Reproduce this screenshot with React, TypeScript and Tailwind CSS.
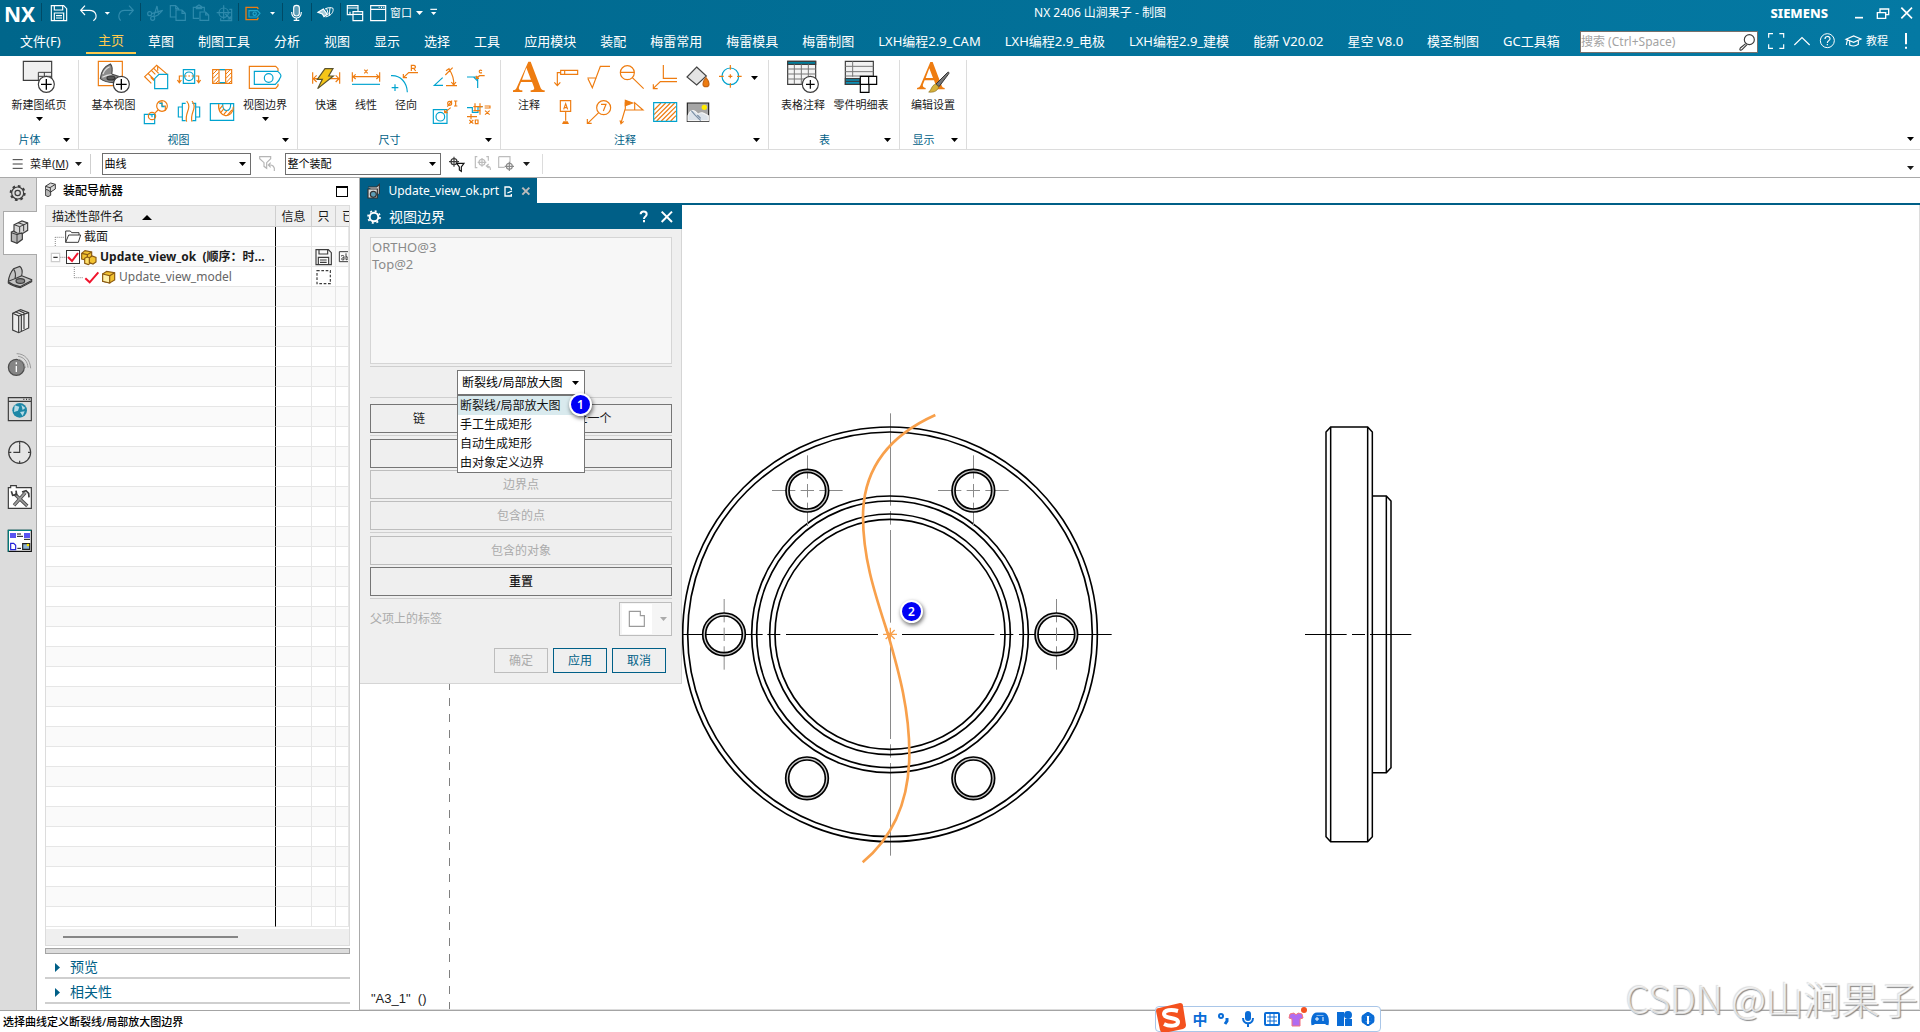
import { useState } from 'react';
import type { ReactNode } from 'react';

const ORANGE = '#ee7c10';
const CYAN = '#00a3cf';
const DARK = '#3c3c3c';

// Icon artwork is drawn on a grid of 3 units per pixel.
type Box = [number, number, number, number];

function Art({ box, color = DARK, className = '', children }: { box: Box; color?: string; className?: string; children?: ReactNode }) {
  return (
    <svg
      className={`block shrink-0 ${className}`}
      width={box[2] / 3}
      height={box[3] / 3}
      viewBox={box.join(' ')}
      fill="none"
      stroke={color}
      strokeWidth={3.5}
      aria-hidden="true"
    >
      {children}
    </svg>
  );
}

function Caret({ className = '' }: { className?: string }) {
  return (
    <svg className={`block shrink-0 ${className}`} width="7" height="4" viewBox="0 0 7 4" fill="currentColor" aria-hidden="true">
      <path d="M0 0h7L3.500 4z" />
    </svg>
  );
}

function Divider() {
  return <span className="mb-1 h-[18px] w-px shrink-0 bg-[#004a66]" />;
}

function QuickBar() {
  const dim = '#2f8bad';
  return (
    <div className="flex h-7 w-[440px] shrink-0 items-center text-white">
      <span className="w-[41px] shrink-0 pb-px pl-1 text-[21px] leading-6 font-bold">NX</span>
      <Divider />
      <button aria-label="保存">
        <Art box={[126, 0, 102, 84]} color="#fff">
          <path d="M154 17h37l9 9v36h-46zM163 17v13h25v-13M163 62v-23h28v23M168 47h18M168 54h18" />
        </Art>
      </button>
      <button aria-label="撤消">
        <Art box={[228, 0, 72, 84]} color="#fff">
          <path d="M255 17l-13 14 13 14M242 31h26c22 0 26 22 12 31" />
        </Art>
      </button>
      <button aria-label="撤消列表">
        <Art box={[300, 0, 45, 84]} color="none">
          <path d="M314 36h16l-8 8z" fill="#fff" />
        </Art>
      </button>
      <button aria-label="重做" disabled>
        <Art box={[345, 0, 75, 84]} color={dim}>
          <path d="M387 17l13 14-13 14M400 31h-26c-18 0-22 20-12 31" />
        </Art>
      </button>
      <Divider />
      <button aria-label="剪切" disabled>
        <Art box={[423, 0, 78, 84]} color={dim}>
          <circle cx="449" cy="41" r="6" />
          <circle cx="458" cy="55" r="6" />
          <path d="M455 41l33-10-14 14-12 5M461 50l10-32 4 22" />
        </Art>
      </button>
      <button aria-label="复制" disabled>
        <Art box={[501, 0, 69, 84]} color={dim}>
          <path d="M527 51h-16v-34h16l9 9v4M527 17v9h9M528 30h18l10 10v21h-28zM546 30v10h10" />
        </Art>
      </button>
      <button aria-label="粘贴" disabled>
        <Art box={[570, 0, 69, 84]} color={dim}>
          <path d="M597 55h-17v-33h33v12M589 26v-6l8-5 8 5v6zM600 36h17l9 9v16h-26zM617 36v9h9" />
        </Art>
      </button>
      <button aria-label="变换" disabled>
        <Art box={[639, 0, 75, 84]} color={dim}>
          <circle cx="671" cy="38" r="14" />
          <path d="M650 38h42M671 16v42M662 55v7h33v-34h-7M676 42l15 15M691 49v8h-8" />
        </Art>
      </button>
      <Divider />
      <button aria-label="视图边界">
        <Art box={[717, 0, 87, 84]} color={ORANGE}>
          <path d="M775 27l-3-5h-34v37h34l3-6" strokeWidth="4" />
          <path d="M763 32h-16v19h24l9-11-8-8z" stroke="#22a6cc" />
          <circle cx="764" cy="41" r="5" stroke="#22a6cc" />
        </Art>
      </button>
      <button aria-label="视图边界选项">
        <Art box={[804, 0, 42, 84]} color="none">
          <path d="M810 36h15l-7 8z" fill="#fff" />
        </Art>
      </button>
      <Divider />
      <button aria-label="语音">
        <Art box={[849, 0, 84, 84]} color="#fff">
          <rect x="881" y="16" width="17" height="32" rx="8" fill="#5d9db6" />
          <path d="M875 36c0 24 29 24 29 0M889 54v8M881 61h17" />
        </Art>
      </button>
      <Divider />
      <button aria-label="触控">
        <Art box={[936, 0, 84, 84]} color="#fff">
          <path d="M954 37l16-10 12 16-10 7-5-8z" fill="#a5cad8" />
          <path d="M975 27c8-5 20-5 24-2 2 8-3 18-12 22l-10 4M980 25l5 18M990 23l-2 22" strokeWidth="3" />
        </Art>
      </button>
      <Divider />
      <button aria-label="切换窗口">
        <Art box={[1023, 0, 78, 84]} color="#fff">
          <path d="M1059 44h-17v-27h32v18M1042 24h32M1059 35h29v27h-29zM1059 43h29M1050 35v9" />
        </Art>
      </button>
      <button className="flex shrink-0 items-center text-[11px] leading-4 whitespace-nowrap">
        <Art box={[1101, 0, 69, 84]} color="#fff">
          <path d="M1112 17h45v45h-45zM1112 28h45" />
          <path d="M1136 22h3M1143 22h3M1150 22h3" />
        </Art>
        <span className="pb-0.5">窗口</span>
        <Caret className="mb-0.5 ml-1" />
      </button>
      <button aria-label="自定义" className="pl-1">
        <Art box={[1278, 0, 39, 84]} color="#fff">
          <path d="M1288 28h20" />
          <path d="M1290 36h16l-8 9z" fill="#fff" stroke="none" />
        </Art>
      </button>
    </div>
  );
}

const tabs = [
  '草图', '制图工具', '分析', '视图', '显示', '选择', '工具', '应用模块', '装配', '梅雷常用', '梅雷模具', '梅雷制图',
  'LXH编程2.9_CAM', 'LXH编程2.9_电极', 'LXH编程2.9_建模', '能新 V20.02', '星空 V8.0', '模圣制图', 'GC工具箱',
];

function Header() {
  return (
    <header className="bg-linear-to-r from-[#00668b] to-[#0479a3] text-white">
      <div className="flex h-7 items-center">
        <QuickBar />
        <h1 className="flex-1 pb-0.5 text-center text-xs">NX 2406 山涧果子 - 制图</h1>
        <div className="flex h-7 w-[160px] shrink-0 items-center justify-end">
          <span className="pr-3 text-[13px] font-extrabold">SIEMENS</span>
          <button aria-label="最小化">
            <Art box={[1200, 0, 90, 84]} color="#fff"><path d="M1245 53h24" strokeWidth="5" /></Art>
          </button>
          <button aria-label="还原">
            <Art box={[1290, 0, 75, 84]} color="#fff"><path d="M1320 37v-10h26v17h-8M1312 38h25v17h-25z" strokeWidth="4" /></Art>
          </button>
          <button aria-label="关闭">
            <Art box={[1365, 0, 75, 84]} color="#fff"><path d="M1384 23l32 32M1416 23l-32 32" strokeWidth="5" /></Art>
          </button>
        </div>
      </div>
      <nav className="flex h-7 items-center text-[13px] leading-5 whitespace-nowrap">
        <button className="w-[86px] shrink-0 pb-0.5 pl-5 text-left">文件(F)</button>
        <button className="h-[26px] self-start border-b-2 border-[#ffc94d] px-3 text-[#ffc94d]">主页</button>
        {tabs.map((tab) => (
          <button key={tab} className="px-3 pb-0.5">{tab}</button>
        ))}
        <div className="ml-auto flex items-center">
          <div className="flex h-[22px] w-[178px] items-center border border-[#77716c] bg-white">
            <input
              type="search"
              aria-label="搜索"
              placeholder="搜索 (Ctrl+Space)"
              className="h-5 min-w-0 flex-1 pb-0.5 text-xs text-[#333] outline-none placeholder:text-[#a3a3a3]"
            />
            <Art box={[894, 93, 57, 60]}>
              <circle cx="928" cy="116" r="15" />
              <path d="M917 128l-16 13c-4 5 1 9 5 5l15-15" />
            </Art>
          </div>
          <button aria-label="全屏">
            <Art box={[954, 84, 93, 84]} color="#fff">
              <path d="M986 113v-12h13M1018 101h13v12M1031 133v12h-13M999 145h-13v-12" />
            </Art>
          </button>
          <button aria-label="收起功能区">
            <Art box={[1047, 84, 78, 84]} color="#fff"><path d="M1063 135l23-22 23 22" /></Art>
          </button>
          <button aria-label="帮助">
            <Art box={[1125, 84, 75, 84]} color="#fff">
              <circle cx="1162" cy="122" r="21" strokeWidth="3" />
              <path d="M1155 117c0-10 15-10 15-1 0 6-8 6-8 13M1162 132v4" />
            </Art>
          </button>
          <button className="flex items-center text-[11px]">
            <Art box={[1200, 84, 78, 84]} color="#fff">
              <path d="M1218 118l23-10 22 9-22 10zM1229 123v12c8 4 18 4 26-2v-12M1222 120l-3 15" />
            </Art>
            <span className="pb-0.5">教程</span>
          </button>
          <button aria-label="提醒">
            <Art box={[1344, 84, 96, 84]} color="#fff"><path d="M1398 99v34M1398 140v6" strokeWidth="6" /></Art>
          </button>
        </div>
      </nav>
    </header>
  );
}

function Group({ label, className, children }: { label: string; className: string; children: ReactNode }) {
  return (
    <section className={`mt-1 flex shrink-0 flex-col border-r border-[#dcdcdc] ${className}`}>
      <div className="flex flex-1">{children}</div>
      <div className="flex h-[18px] items-center text-[11px] leading-4 text-[#005f87]">
        <span className="flex-1 text-center">{label}</span>
        <button aria-label={`${label}选项`} className="mr-2 ml-1"><Caret className="text-black" /></button>
      </div>
    </section>
  );
}

function Big({ label, className, menu, children }: { label: string; className: string; menu?: boolean; children: ReactNode }) {
  return (
    <button className={`flex shrink-0 flex-col items-center text-[11px] leading-4 whitespace-nowrap text-[#1a1a1a] ${className}`}>
      {children}
      <span className="mt-[3px]">{label}</span>
      {menu && <Caret className="mt-1 text-black" />}
    </button>
  );
}

// Small command cells are 33 x 35, in two rows
function Small({ label, at, color = ORANGE, children }: { label: string; at: [number, number]; color?: string; children: ReactNode }) {
  return (
    <button aria-label={label}>
      <Art box={[at[0], at[1], 99, 105]} color={color}>{children}</Art>
    </button>
  );
}

function Ribbon() {
  return (
    <div className="flex h-[94px] border-b border-[#dcdcdc] bg-white">
      <Group label="片体" className="w-[79px]">
        <Big label="新建图纸页" className="w-[78px]" menu>
          <Art box={[69, 180, 102, 102]}>
            <path d="M73 184h85v57h-85z" fill="#f0f0f0" />
            <path d="M118 241v-24h40M118 229h40M136 217v12" strokeWidth="3" />
            <circle cx="142" cy="253" r="24" fill="#fff" />
            <path d="M126 253h32M142 237v32" strokeWidth="4" stroke="#000" />
          </Art>
        </Big>
      </Group>

      <Group label="视图" className="w-[219px] [&>div:first-child]:pl-2">
        <Big label="基本视图" className="w-[53px]">
          <Art box={[288, 180, 102, 102]} color={ORANGE}>
            <path d="M292 184h72v73h-72z" />
            <path d="M298 236c2-20 10-36 30-44 6 6 6 20 4 30l24 8c2 8-6 16-18 18-16 0-30-4-40-12z" fill="#8c8c8c" stroke="#4b4b4b" />
            <path d="M306 222c4-12 10-18 20-22M304 232c10-6 18-8 28-8" stroke="#e2e2e2" />
            <ellipse cx="330" cy="234" rx="12" ry="6" fill="#555" stroke="#333" />
            <circle cx="361" cy="253" r="24" fill="#fff" stroke={DARK} />
            <path d="M345 253h32M361 237v32" strokeWidth="4" stroke="#000" />
          </Art>
        </Big>
        <div className="grid grid-cols-3 grid-rows-2 self-start">
          <Small label="投影视图" at={[420, 180]}>
            <path d="M454 250l-20-20 36-34 32 27M444 220l20 20M454 211l12 12M473 197v15M462 206l14 14M452 232l10 10" />
            <path d="M477 223h26v43h-39v-30z" stroke={CYAN} fill="#fff" />
          </Small>
          <Small label="剖视图" at={[519, 180]}>
            <path d="M550 209h34v41h-34z" stroke={CYAN} />
            <circle cx="567" cy="229" r="13" stroke={CYAN} />
            <path d="M538 246v-18h10M554 228h6M565 228h5M575 228h6M587 228h9v18M532 240l6 8 6-8M590 240l6 8 6-8" />
          </Small>
          <Small label="断面" at={[618, 180]}>
            <path d="M638 209h57v41h-57zM657 209v41M677 209v41" />
            <path d="M639 222l12-12M639 235l17-18M639 248l17-18M648 249l8-8M678 222l12-12M678 235l17-18M678 248l17-18M687 249l8-8" strokeWidth="3" />
            <path d="M659 209h16M659 248h16" stroke={CYAN} />
          </Small>
          <Small label="局部放大图" at={[420, 285]}>
            <path d="M433 343h31v28h-31z" stroke={CYAN} />
            <circle cx="456" cy="348" r="11" />
            <circle cx="486" cy="318" r="16" />
            <path d="M464 340l10-10M474 306h12v12h10v14" />
            <path d="M478 310h8v10h8M448 344h8v8" stroke={CYAN} />
          </Small>
          <Small label="断开视图" at={[519, 285]}>
            <path d="M557 310h-10v52h10M577 310h10v52h-10M547 321h-12v30h12M587 321h12v30h-12" stroke={CYAN} />
            <path d="M560 303c18 22-8 36 0 62M576 303c18 22-8 36 0 62" />
          </Small>
          <Small label="局部剖视图" at={[618, 285]}>
            <path d="M631 311h70v50h-70z" stroke={CYAN} />
            <path d="M656 312c-4 44 44 46 44 8" />
            <path d="M668 312c0 26 24 26 24 0" stroke={CYAN} />
            <path d="M658 328l10-12M662 338l10-12M671 344l10-12M682 346l14-16" />
          </Small>
        </div>
        <Big label="视图边界" className="w-[52px]" menu>
          <Art box={[744, 180, 102, 102]} color={ORANGE}>
            <path d="M834 214v-8l-7-7h-79v66h79l7-8v-6" />
            <path d="M763 214h70c10 8 12 14 7 20-2 8-8 12-14 19h-63z" stroke={CYAN} />
            <circle cx="806" cy="234" r="13" stroke={CYAN} />
          </Art>
        </Big>
      </Group>

      <Group label="尺寸" className="w-[203px] [&>div:first-child]:pl-2">
        <Big label="快速" className="w-10">
          <Art box={[927, 180, 102, 102]} color={ORANGE}>
            <path d="M938 217v34M1019 217v34M940 236h77M950 226l-10 10 10 10M1007 226l10 10-10 10" />
            <path d="M975 206h24l-13 22h14l-47 38 14-28h-15z" fill="#f5c518" stroke="#5b532d" />
          </Art>
        </Big>
        <Big label="线性" className="w-10">
          <Art box={[1050, 180, 102, 102]} color={ORANGE}>
            <path d="M1060 217v28M1142 217v28M1062 230h78M1070 223l-8 7 8 7M1132 223l8 7-8 7M1096 209l10 11M1106 209l-10 11" />
            <path d="M1059 253h84" stroke={CYAN} />
          </Art>
        </Big>
        <Big label="径向" className="w-10">
          <Art box={[1170, 180, 102, 102]} color={ORANGE}>
            <path d="M1176 227c28-2 48 20 49 50M1178 263h20M1188 253v20" stroke={CYAN} />
            <path d="M1257 218h-28l-15 14M1213 222v11h11M1237 213v-17h8c6 2 6 8 0 9h-8M1244 205l6 8" />
          </Art>
        </Big>
        <div className="ml-0.5 grid grid-cols-2 grid-rows-2 self-start">
          <Small label="角度" at={[1284, 180]}>
            <path d="M1328 233l-25 23h26" stroke={CYAN} />
            <path d="M1358 203l-22 22M1347 207c10 15 16 28 14 48M1338 212l9-6 3 10M1354 246l7 9 7-9M1338 257h33" />
          </Small>
          <Small label="倒斜角" at={[1383, 180]}>
            <path d="M1401 231h20l12 12v21M1413 231h20v12" stroke={CYAN} />
            <path d="M1454 227h-15l-11 8M1429 227v8h8M1446 212c-10-6-12 10 0 6" />
          </Small>
          <Small label="孔标注" at={[1284, 285]}>
            <path d="M1300 329h41v41h-41z" stroke={CYAN} />
            <circle cx="1321" cy="350" r="13" stroke={CYAN} />
            <path d="M1352 323l-18 15M1334 329v9h9M1362 303h10M1362 318h10M1367 303v15M1342 320l14-18" />
            <circle cx="1349" cy="310" r="6" />
          </Small>
          <Small label="坐标" at={[1383, 285]}>
            <path d="M1401 323h16v14h17v-17h14" stroke={CYAN} />
            <path d="M1420 320h28M1420 332h22M1425 310v20M1440 310v34M1454 318h16v6h-16M1455 332l14 12M1469 332l-14 12M1401 350h30M1413 342v16M1408 360l12 11M1420 360l-12 11M1426 360h8v11h-8z" />
          </Small>
        </div>
      </Group>

      <Group label="注释" className="w-[268px] [&>div:first-child]:pl-2">
        <Big label="注释" className="w-10">
          <Art box={[36, 180, 102, 102]} color="none">
            <path d="M85 185h7l30 79c2 5 6 7 12 7v5h-42v-5c10 0 12-3 10-9l-6-16H63l-6 15c-2 7 1 10 10 10v5H39v-5c7-1 9-3 12-10zM66 239h27l-14-36z" fill={ORANGE} fillRule="evenodd" />
          </Art>
        </Big>
        <div className="grid grid-cols-6 grid-rows-2 self-start">
          <Small label="特征控制框" at={[147, 180]}>
            <path d="M182 211h51v12h-51zM194 211v12M182 218h-10v38M163 247l9 10 9-10" />
          </Small>
          <Small label="表面粗糙度" at={[246, 180]}>
            <path d="M262 234h28M264 236l13 27 24-64h29" />
          </Small>
          <Small label="焊接符号" at={[345, 180]}>
            <circle cx="382" cy="218" r="21" />
            <path d="M361 217h42M397 233l34 33" />
          </Small>
          <Small label="目标点" at={[444, 180]}>
            <path d="M490 195v40h41M531 245h-50l-21 20M460 253v13h13" />
          </Small>
          <Small label="剖面填充" at={[543, 180]}>
            <path d="M590 201l29 27-29 27-29-24z" fill="#e4e4e4" stroke="#444" />
            <path d="M618 233c-12 14-12 27 0 27s12-13 0-27z" fill={ORANGE} stroke="#c56516" />
          </Small>
          <Small label="中心标记" at={[642, 180]}>
            <circle cx="691" cy="229" r="25" stroke={CYAN} />
            <path d="M657 229h14M711 229h14M691 195v14M691 249v14M685 229h12M691 223v12" />
          </Small>
          <Small label="基准特征" at={[147, 285]}>
            <path d="M181 302h31v32h-31zM197 334v28M191 328l6-17 6 17M193 323h8" />
            <path d="M186 372l4-8h13l4 8z" fill={ORANGE} stroke="none" />
          </Small>
          <Small label="符号标注" at={[246, 285]}>
            <circle cx="311" cy="323" r="21" />
            <path d="M303 313h15l-8 20M296 338l-33 32M262 357v13h13" />
          </Small>
          <Small label="焊接标注" at={[345, 285]}>
            <path d="M376 307v18l-13 44M360 361l3 10 8-7M376 330h53l-25-22v22" />
            <path d="M376 301l22 8-22 8z" fill={ORANGE} />
          </Small>
          <Small label="剖面线" at={[444, 285]}>
            <path d="M462 330l21-21M462 344l35-35M462 358l49-49M470 363l54-54M484 363l44-44M498 363l30-30M512 363l16-16" />
            <path d="M461 308h69v56h-69z" stroke={CYAN} />
          </Small>
          <Small label="图像" at={[543, 285]}>
            <path d="M562 309h64v55h-64z" fill="#a5a5a5" stroke="#222" />
            <path d="M564 347c8-20 18-20 30-4 10-10 20-2 31 4v15h-61z" fill="#dce3ea" stroke="#f5f5f5" />
            <path d="M574 332l10 12 18 18M592 345l10 10" stroke="#7a8fa6" />
            <circle cx="613" cy="322" r="8" fill="#ffec00" stroke="none" />
          </Small>
        </div>
        <button aria-label="更多注释" className="flex h-[35px] w-3.5 items-center justify-center"><Caret /></button>
      </Group>

      <Group label="表" className="w-[131px] [&>div:first-child]:pl-[5px]">
        <Big label="表格注释" className="w-[58px]">
          <Art box={[858, 180, 102, 102]}>
            <path d="M863 184h84v69h-84z" fill="#f4f4f4" />
            <path d="M863 184h84v9h-84z" fill="#00809f" />
            <path d="M863 207h84M863 222h84M863 237h84M883 193v60M904 193v60M925 193v60" strokeWidth="3" stroke="#777" />
            <circle cx="931" cy="253" r="24" fill="#fff" />
            <path d="M918 253h26M931 240v26" stroke="#000" />
          </Art>
        </Big>
        <Big label="零件明细表" className="w-[58px]">
          <Art box={[1029, 180, 102, 102]}>
            <path d="M1033 184h84v69h-84z" fill="#f1f1f1" />
            <path d="M1033 199h84M1033 215h84M1033 228h84M1055 184v46" strokeWidth="3" stroke="#777" />
            <path d="M1033 236h44v17h-44z" fill="#0d8fb5" />
            <path d="M1033 244h44" />
            <path d="M1078 229h49v24h-23v24h-26zM1103 229v24M1078 253h26" fill="#fff" stroke="#000" />
          </Art>
        </Big>
      </Group>

      <Group label="显示" className="w-[67px]">
        <Big label="编辑设置" className="w-[66px]">
          <Art box={[1251, 180, 102, 102]} color="none">
            <path d="M1294 186h7l26 68c2 7 5 9 10 10v4h-34v-4c8-1 9-4 7-9l-5-14h-28l-5 12c-2 7 1 10 8 11v4h-26v-4c7-1 9-4 11-9zM1280 234h22l-11-29z" fill={ORANGE} fillRule="evenodd" />
            <path d="M1311 252l35-35c6-2 4 4 2 6l-28 37z" fill="#777" stroke="#333" strokeWidth="3" />
            <path d="M1310 252l9 9c-4 14-18 17-30 15 8-4 8-20 21-24z" fill="#d6b13a" stroke="#8a6d1c" strokeWidth="2" />
          </Art>
        </Big>
      </Group>
      <button aria-label="功能区选项" className="mr-1.5 mb-2 ml-auto self-end"><Caret /></button>
    </div>
  );
}

function Combo({ label, value, className }: { label: string; value: string; className: string }) {
  return (
    <div className={`relative ${className}`}>
      <select aria-label={label} className="block h-[22px] w-full appearance-none border border-[#6e6e6e] bg-white px-0.5 text-[11px] leading-4 text-black outline-none">
        <option>{value}</option>
      </select>
      <Caret className="pointer-events-none absolute top-[9px] right-[5px] text-black" />
    </div>
  );
}

function SelectionBar() {
  return (
    <div className="flex h-7 items-center border-b border-[#a9a9a9] bg-white text-[11px] leading-4 text-[#1a1a1a]">
      <button className="flex items-center pl-3">
        <Art box={[36, 460, 54, 60]}><path d="M38 477h30M38 490h30M38 503h30" strokeWidth="3" /></Art>
        <span>菜单(<u>M</u>)</span>
        <Caret className="ml-1.5" />
      </button>
      <span className="ml-2 h-5 w-px bg-[#cfcfcf]" />
      <Combo label="类型过滤器" value="曲线" className="ml-[11px] w-[149px]" />
      <button aria-label="过滤器" disabled>
        <Art box={[753, 453, 102, 78]} color="#b5b5b5">
          <path d="M779 470h33v6l-12 12v17l-8-6v-11l-13-12zM812 488l-7 7 7 7M805 495c14-2 20 6 18 18" />
        </Art>
      </button>
      <Combo label="选择范围" value="整个装配" className="w-[156px]" />
      <button aria-label="选择方法">
        <Art box={[1323, 453, 87, 78]}>
          <circle cx="1362" cy="485" r="9" />
          <path d="M1347 485h30M1362 470v30" />
          <path d="M1370 490h22l-8 11v13l-6-4v-9z" fill="#fff" stroke="#111" />
        </Art>
      </button>
      <button aria-label="重置选择" disabled>
        <Art box={[1410, 453, 78, 78]} color="#bdbdbd">
          <circle cx="1446" cy="487" r="9" />
          <path d="M1432 470h-6v33h6M1459 470h6v12M1433 487h26M1446 474v26M1466 492l-7 6 7 6M1460 498c8 0 12 4 11 12" />
        </Art>
      </button>
      <button aria-label="选择框" className="flex items-center" disabled>
        <Art box={[-12, 453, 75, 78]} color="#bdbdbd">
          <path d="M-4 470h34v20M-4 470v32h18" />
          <circle cx="28" cy="499" r="9" stroke="#8a8a8a" />
          <path d="M14 499h28M28 485v28" stroke="#8a8a8a" />
        </Art>
      </button>
      <button aria-label="选择框选项" className="ml-0.5"><Caret /></button>
      <span className="ml-3 h-5 w-px bg-[#dcdcdc]" />
      <button aria-label="选择条选项" className="mt-2 mr-1.5 ml-auto"><Caret /></button>
    </div>
  );
}

const resources: { label: string; box: Box; art: ReactNode }[] = [
  {
    label: '装配导航器',
    box: [12, 126, 96, 126],
    art: (
      <>
        <path d="M34 186l16-7 17 7v22l-16 12-17-7z" fill="#b5b5b5" />
        <path d="M42 164l24-11 17 6v22l-16 10-16-2-9-5z" fill="#d8d8d8" />
        <path d="M42 164l17 6 24-11M59 170v18M34 188l17 6 16-6M51 194v26M54 158l17 6v20" strokeWidth="3" />
      </>
    ),
  },
  {
    label: '约束导航器',
    box: [0, 255, 108, 132],
    art: (
      <>
        <path d="M25 334c2-16 6-26 16-38l18-7c8 6 8 20 6 28l30 12v6l-34 18c-16-3-28-8-36-14z" fill="#c4c4c4" />
        <path d="M41 298c6 8 6 20 4 28l-20 8M45 326l20-9M26 336c10 8 20 12 34 14l34-18" />
        <ellipse cx="61" cy="333" rx="13" ry="7" fill="#8a8a8a" />
      </>
    ),
  },
  {
    label: '重用库',
    box: [0, 387, 108, 132],
    art: (
      <>
        <path d="M38 430l24-11 24 9v46l-30 14-18-8z" fill="#ececec" />
        <path d="M38 430l18 8v50M56 438l30-10M46 425l18 8v50M54 421l18 8v48" />
      </>
    ),
  },
  {
    label: '产品信息',
    box: [0, 519, 108, 132],
    art: (
      <>
        <circle cx="49" cy="592" r="24" fill="#858585" stroke="#4c4c4c" />
        <path d="M49 588v18M49 577v6" stroke="#fff" strokeWidth="4" />
        <path d="M54 568c12 2 20 12 22 26M54 559c18 2 29 16 30 34M50 551c24 0 40 18 42 44" stroke="#9a9a9a" strokeWidth="3" />
      </>
    ),
  },
  {
    label: '浏览器',
    box: [0, 21, 108, 132],
    art: (
      <>
        <path d="M25 53h69v69h-69zM25 64h69M70 58h3M78 58h3M86 58h3" />
        <circle cx="59" cy="91" r="22" fill="#1d87a6" stroke="none" />
        <path d="M44 76l14 4-4 12-12 4zM64 74l12 10-8 6zM60 96l14-2-6 14zM44 102l8 6" fill="#b5dbe6" stroke="none" />
      </>
    ),
  },
  {
    label: '历史记录',
    box: [0, 153, 108, 132],
    art: (
      <>
        <circle cx="59" cy="217" r="33" fill="#e6e6e6" />
        <path d="M59 193v24h-19M59 184v8M59 242v8M26 217h8M84 217h8" />
      </>
    ),
  },
  {
    label: '加工向导',
    box: [0, 285, 108, 132],
    art: (
      <>
        <path d="M25 323h7v-6h17v6h45v62h-69z" fill="#fff" />
        <path d="M42 376l34-38M44 342l38 36" stroke="#4a4a4a" strokeWidth="10" />
        <path d="M42 376l34-38M44 342l38 36" stroke="#9d9d9d" strokeWidth="5" />
        <path d="M66 336l12-4 8 8 1 12M34 334l4 12 12-2-2-12" strokeWidth="5" />
      </>
    ),
  },
  {
    label: '角色',
    box: [0, 417, 108, 132],
    art: (
      <>
        <path d="M25 451h69v63h-69z" fill="#fff" stroke="#111" />
        <path d="M25 515v-64h69" stroke="#008080" />
        <path d="M30 459h18v15h-18zM72 459h18v15h-18z" fill="#5a55f0" stroke="none" />
        <path d="M51 462h12M51 469h18M52 505h11M72 478h18" stroke="#111" strokeWidth="3" />
        <path d="M32 490h9l6 6v13h-15z" stroke="#2522d8" />
        <path d="M68 491h21v17h-21z" fill="#8db3d6" stroke="#222" />
        <circle cx="84" cy="495" r="4" fill="#ffe600" stroke="none" />
      </>
    ),
  },
];

function ResourceBar() {
  return (
    <nav className="flex w-[37px] shrink-0 flex-col bg-[#dcdcdc]" aria-label="资源条">
      <button aria-label="设置" className="h-[33px] border-r border-[#aaa]">
        <Art box={[0, 24, 108, 99]}>
          <circle cx="53" cy="69" r="18" />
          <circle cx="53" cy="69" r="8" />
          <circle cx="53" cy="69" r="21" strokeWidth="6" strokeDasharray="8 8.490" />
        </Art>
      </button>
      {resources.map((item, i) =>
        i === 0 ? (
          <button key={item.label} aria-label={item.label} className="ml-[3px] h-11 border-y border-l border-[#aaa] bg-white">
            <Art box={item.box}>{item.art}</Art>
          </button>
        ) : (
          <button key={item.label} aria-label={item.label} className="h-11 border-r border-[#aaa]">
            <Art box={item.box}>{item.art}</Art>
          </button>
        ),
      )}
      <div className="flex-1 border-r border-[#aaa]" />
    </nav>
  );
}

const cell = 'h-5 border-r border-b border-[#e6e6e6] p-0';
const nameCell = 'h-5 border-r border-b border-r-black border-b-[#e6e6e6] p-0';

function Cube() {
  return (
    <>
      <path d="M308 312l12-8 24 4v22l-15 9-21-5z" fill="#f2c230" stroke="#8a5a12" />
      <path d="M308 312l21 5v22l-21-5z" fill="#fff0a8" stroke="#8a5a12" />
      <path d="M329 317l15-9" stroke="#8a5a12" />
    </>
  );
}

function PartTree() {
  const [checked, setChecked] = useState(true);
  const blank = Array.from({ length: 32 });
  return (
    <div className="overflow-hidden border border-[#dcdcdc]">
      <table className="w-full table-fixed border-separate border-spacing-0 text-xs leading-4 text-[#1a1a1a]">
        <colgroup>
          <col />
          <col className="w-9" />
          <col className="w-6" />
          <col className="w-[13px]" />
        </colgroup>
        <thead className="bg-[#efefef] text-left">
          <tr>
            <th className="h-[21px] border-r border-b border-[#cfcfcf] p-0 pt-0.5 pl-1.5 font-normal">
              <span className="flex items-center">
                描述性部件名
                <svg className="ml-[18px]" width="10" height="5" viewBox="0 0 10 5" aria-hidden="true"><path d="M0 5h10L5 0z" /></svg>
              </span>
            </th>
            <th className="border-r border-b border-[#cfcfcf] p-0 pt-0.5 text-center font-normal">信息</th>
            <th className="border-r border-b border-[#cfcfcf] p-0 pt-0.5 text-center font-normal">只</th>
            <th className="overflow-hidden border-b border-[#cfcfcf] p-0 pt-0.5 pl-1.5 font-normal whitespace-nowrap">已</th>
          </tr>
        </thead>
        <tbody>
          <tr>
            <td className={nameCell}>
              <div className="flex items-center">
                <Art box={[138, 171, 114, 57]}>
                  <path d="M166 228v-27M166 202h26" stroke="#999" strokeDasharray="3 3" />
                  <path d="M197 217v-34h14l4 5h22v7M197 217l9-22h36l-7 22z" strokeWidth="3" />
                </Art>
                截面
              </div>
            </td>
            <td className={cell} /><td className={cell} /><td className={cell} />
          </tr>
          <tr className="bg-[#fafafa]">
            <td className={nameCell}>
              <div className="flex items-center">
                <Art box={[138, 231, 60, 57]}>
                  <path d="M154 250h25v25h-25z" fill="#fff" stroke="#ccc" />
                  <path d="M160 262h13" stroke="#222" />
                  <path d="M181 262h16" stroke="#999" strokeDasharray="3 3" />
                </Art>
                <label className="relative block size-3.5 shrink-0">
                  <input
                    type="checkbox"
                    aria-label="Update_view_ok"
                    checked={checked}
                    onChange={() => setChecked(!checked)}
                    className="block size-3.5 appearance-none border border-[#333] bg-white"
                  />
                  {checked && (
                    <svg className="pointer-events-none absolute inset-0" viewBox="0 0 14 14" fill="none" stroke="#f0142d" strokeWidth="2" aria-hidden="true">
                      <path d="M2 7l4 4 6-8" />
                    </svg>
                  )}
                </label>
                <Art box={[240, 231, 60, 57]} color="#8a5a12">
                  <path d="M245 250l10-8 20 4v18l-12 7-18-4z" fill="#f2c230" />
                  <path d="M245 250l17 4 13-8M262 254v16" />
                  <path d="M254 265l7-4 12 3v14l-8 6-11-4z" fill="#ffe06a" />
                  <path d="M268 263l8-5 12 4v14l-9 6-11-4z" fill="#f2c230" />
                </Art>
                <span className="font-bold whitespace-pre">Update_view_ok  (顺序：时...</span>
              </div>
            </td>
            <td className={cell} />
            <td className={cell}>
              <Art box={[937, 231, 66, 57]}>
                <path d="M949 239h37l9 9v36h-46zM958 239v13h26v-13M956 284v-22h31v22M961 270h20M961 277h20" />
              </Art>
            </td>
            <td className={cell}>
              <Art box={[1011, 231, 36, 57]}>
                <path d="M1060 245h-39v30h39M1026 258c8-4 9 0 9 4v7c-8 3-12-5 0-6M1041 250v19c8 2 8-10 0-9" strokeWidth="3" />
              </Art>
            </td>
          </tr>
          <tr>
            <td className={nameCell}>
              <div className="flex items-center">
                <Art box={[138, 291, 219, 57]}>
                  <path d="M223 291v32M223 323h26" stroke="#999" strokeDasharray="3 3" />
                  <path d="M256 325l13 12 26-30" stroke="#f0142d" strokeWidth="6" />
                  <Cube />
                </Art>
                <span className="text-[#666]">Update_view_model</span>
              </div>
            </td>
            <td className={cell} />
            <td className={cell}>
              <Art box={[937, 291, 66, 57]}>
                <path d="M952 302h40v39h-40z" strokeDasharray="8 5" />
              </Art>
            </td>
            <td className={cell} />
          </tr>
          {blank.map((_, i) => (
            <tr key={i} className="odd:bg-white even:bg-[#fafafa]">
              <td className={nameCell} /><td className={cell} /><td className={cell} /><td className={cell} />
            </tr>
          ))}
        </tbody>
      </table>
      <div className="mt-0.5 flex h-4 items-center bg-[#efefef] pl-[17px]">
        <div className="h-0.5 w-[175px] bg-[#868686]" />
      </div>
    </div>
  );
}

function Navigator() {
  return (
    <aside className="flex w-[323px] shrink-0 flex-col border-r border-[#aaa] bg-white pr-[9px] pl-2">
      <div className="flex h-[27px] items-center">
        <Art box={[135, 24, 54, 81]}>
          <path d="M136 60l8-5 8 4v17l-8 4-8-4z" fill="#b5b5b5" strokeWidth="3" />
          <path d="M136 49l16-10 14 4v14l-14 9-8-6-8-2z" fill="#d8d8d8" strokeWidth="3" />
          <path d="M136 49l14 4 16-10M151 54v14" strokeWidth="3" />
        </Art>
        <h2 className="pb-0.5 text-xs font-medium text-black">装配导航器</h2>
        <button aria-label="最大化" className="mr-0.5 ml-auto h-[11px] w-3 border border-t-2 border-black" />
      </div>
      <PartTree />
      <div className="mt-0.5 h-1.5 border border-[#a4a4a4] bg-[#dcdcdc]" />
      {['预览', '相关性'].map((name) => (
        <button key={name} className="flex h-[25px] items-center border-b-2 border-[#cfcfcf] pt-[3px] pl-[10px] text-left text-sm leading-5 text-[#005f87]">
          <svg className="mr-2.5" width="5" height="9" viewBox="0 0 5 9" fill="currentColor" aria-hidden="true"><path d="M0 0l5 4.500L0 9z" /></svg>
          {name}
        </button>
      ))}
    </aside>
  );
}

function Step({ n, className }: { n: number; className: string }) {
  return (
    <span className={`absolute flex size-[23px] items-center justify-center rounded-full border-2 border-white bg-[#0000f5] text-xs font-semibold text-white shadow-[1px_2px_4px_rgba(0,0,0,0.6)] ${className}`}>
      {n}
    </span>
  );
}

const modes = ['断裂线/局部放大图', '手工生成矩形', '自动生成矩形', '由对象定义边界'];

const wide = 'block h-[29px] border border-[#757575] text-xs leading-4 text-[#1a1a1a] disabled:border-[#bdbdbd] disabled:text-[#ababab]';

function Line() {
  return <div className="mt-0.5 mb-[3px] h-px bg-[#cfcfcf]" />;
}

function BoundaryDialog() {
  const [mode, setMode] = useState(modes[0]);
  return (
    <div role="dialog" aria-label="视图边界" className="absolute top-0 left-0 w-[322px] border-b border-[#d5d5d5] bg-[#efefef] shadow-[inset_-1px_0_0_#d5d5d5]">
      <div className="flex h-6 items-center bg-[#005f87] text-white">
        <Art box={[30, 105, 87, 72]} color="#fff">
          <circle cx="72" cy="141" r="13" strokeWidth="6" />
          <circle cx="72" cy="141" r="18" strokeWidth="5" strokeDasharray="6 8.140" />
        </Art>
        <h2 className="text-sm leading-5">视图边界</h2>
        <button aria-label="帮助" className="ml-auto">
          <Art box={[860, 105, 60, 72]} color="#fff">
            <path d="M871 133c0-11 18-11 18 0 0 7-8 6-8 14M881 150v7" strokeWidth="6" />
          </Art>
        </button>
        <button aria-label="关闭">
          <Art box={[920, 105, 75, 72]} color="#fff"><path d="M934 125l31 31M965 125l-31 31" strokeWidth="6" /></Art>
        </button>
      </div>
      <div className="flex flex-col px-2.5 pt-2 pb-2.5">
        <ul className="h-[127px] border border-[#d5d5d5] bg-[#f7f7f7] px-px pt-px text-[13px] leading-[17px] text-[#8a8a8a]">
          <li>ORTHO@3</li>
          <li>Top@2</li>
        </ul>
        <Line />
        <div className="relative mx-auto h-[25px] w-32">
          <select
            aria-label="边界类型"
            value={mode}
            onChange={(e) => setMode(e.target.value)}
            className="block h-full w-full appearance-none border border-[#757575] bg-white px-1 text-xs leading-4 text-black outline-none"
          >
            {modes.map((m) => <option key={m}>{m}</option>)}
          </select>
          <Caret className="pointer-events-none absolute top-[11px] right-1.5 text-black" />
          <div role="listbox" aria-label="边界类型" className="absolute top-full left-0 z-10 w-full border border-[#757575] bg-white text-xs text-[#111]">
            {modes.map((m) => (
              <button
                key={m}
                role="option"
                aria-selected={m === mode}
                onClick={() => setMode(m)}
                className="block h-[19px] w-full pl-0.5 text-left leading-[19px] aria-selected:bg-[#d9eaee]"
              >
                {m}
              </button>
            ))}
            <Step n={1} className="-top-[3px] -right-2" />
          </div>
        </div>
        <div className="mt-0.5 mb-1.5 h-px bg-[#cfcfcf]" />
        <div className="flex justify-between">
          <button className={`${wide} w-[98px]`}>链</button>
          <button className={`${wide} w-[204px] border-l-0 pl-12`}>上一个</button>
        </div>
        <Line />
        <div className="flex flex-col gap-0.5">
          <button className={wide} aria-label="锚点" />
          <button className={wide} disabled>边界点</button>
          <button className={wide} disabled>包含的点</button>
        </div>
        <Line />
        <div className="flex flex-col gap-0.5">
          <button className={wide} disabled>包含的对象</button>
          <button className={`${wide} font-medium`}>重置</button>
        </div>
        <Line />
        <div className="flex h-[34px] items-center justify-between text-xs text-[#ababab]">
          <span>父项上的标签</span>
          <button aria-label="父项上的标签" className="flex h-full w-[53px] items-center border border-[#bdbdbd] bg-[#f5f5f5] pl-0.5" disabled>
            <span className="flex size-[30px] items-center justify-center bg-white">
              <Art box={[837, 30, 54, 54]} color="#9a9a9a"><path d="M841 34h33v13h12v32h-45z" /></Art>
            </span>
            <Caret className="ml-2" />
          </button>
        </div>
        <div className="mt-3 flex justify-end gap-[5px] pr-1.5 text-xs leading-4">
          <button className="h-[25px] w-[54px] border border-[#bdbdbd] text-[#ababab]" disabled>确定</button>
          <button className="h-[25px] w-[54px] border border-[#005f87] text-[#005f87]">应用</button>
          <button className="h-[25px] w-[54px] border border-[#005f87] text-[#005f87]">取消</button>
        </div>
      </div>
    </div>
  );
}

const holes = [[382, 272, 1], [880, 272, 1], [132, 703, 0], [1129, 703, 0], [381, 1135, -1], [880, 1135, -1]];

function Sheet() {
  return (
    <svg className="absolute inset-0 h-full w-full" fill="none" stroke="#000" aria-label="图纸">
      <line x1="89.500" y1="477" x2="89.500" y2="805" stroke="#808080" strokeDasharray="8 8" />
      <svg x="320" y="195" width="440" height="480" viewBox="0 0 1320 1440">
        <path d="M7 703.500H248M262 703.500h39M318 703.500h276M611 703.500h40M666 703.500h277M960 703.500h40M1017 703.500h278" strokeWidth="3" />
        <path d="M631.500 40V317M631.500 333v41M631.500 390v278M631.500 684v40M631.500 740v277M631.500 1033v40M631.500 1089v278" stroke="#8a8a8a" strokeWidth="3" />
        <g strokeWidth="5">
          {[622, 607, 415, 400, 361, 345].map((r) => (
            <circle key={r} cx="630" cy="703" r={r} />
          ))}
        </g>
        {holes.map(([x, y, kind]) => (
          <g key={`${x}-${y}`} strokeWidth="5">
            {kind >= 0 && (
              <path d={`M${x + 0.5} ${y - 106}v70m0 16v40m0 16v70`} stroke="#8a8a8a" strokeWidth="3" />
            )}
            {kind === 1 && (
              <path d={`M${x - 106} ${y - 0.5}h70m16 0h40m16 0h70`} stroke="#8a8a8a" strokeWidth="3" />
            )}
            <circle cx={x} cy={y} r="60" stroke="#ccc" strokeWidth="8" />
            <circle cx={x} cy={y} r="64" />
            <circle cx={x} cy={y} r="55" />
          </g>
        ))}
        <g stroke="#f8a04b">
          <path d="M766 45C610 115 549 220 549 350C549 480 588 590 624 703C658 820 688 930 688 1060C688 1200 640 1310 548 1387" strokeWidth="8" />
          <path d="M610 703h41M631 683v40M617 690l27 27M644 690l-27 27" strokeWidth="4" />
        </g>
      </svg>
      <svg x="930" y="205" width="140" height="450" viewBox="0 0 420 1350" strokeWidth="4.500">
        <path d="M122 51H233L247 66V1280L233 1295H122L108 1280V66zM122 51V1295M233 51V1295" />
        <path d="M247 258H289L303 273V1073L289 1088H247M289 258V1088" />
        <path d="M45 673.500H170M186 673.500h39M240 673.500h124" strokeWidth="3" />
      </svg>
    </svg>
  );
}

function Workspace() {
  return (
    <main className="flex min-w-0 flex-1 flex-col bg-white">
      <div className="flex h-[27px] border-b-2 border-[#005f87]">
        <div className="flex h-[27px] w-[177px] items-center justify-between bg-[#005f87] text-xs leading-5 text-white">
          <Art box={[30, 24, 78, 75]} color="#333">
            <path d="M54 54h28v27h-28zM54 48h26l8-8v30" fill="#ddd" />
            <circle cx="70" cy="70" r="9" fill="#5d9db6" />
          </Art>
          <span className="pb-0.5">Update_view_ok.prt</span>
          <Art box={[462, 24, 45, 75]} color="#fff">
            <path d="M490 57v-5l-6-4h-13v27h19v-6M478 66l14-6" strokeWidth="4" />
          </Art>
          <button aria-label="关闭标签页">
            <Art box={[507, 24, 54, 75]} color="#bbb"><path d="M517 50l21 21M538 50l-21 21" strokeWidth="6" /></Art>
          </button>
        </div>
      </div>
      <div className="relative flex flex-1 flex-col border-r border-b border-[#dcdcdc]">
        <Sheet />
        <Step n={2} className="top-[395px] left-[540px]" />
        <p className="mt-auto mb-0.5 ml-[11px] font-['Liberation_Sans',sans-serif] text-[13px] leading-4 whitespace-pre text-[#222]">"A3_1"  ()</p>
        <BoundaryDialog />
      </div>
    </main>
  );
}

function ImeBar() {
  const blue = '#0a6cd6';
  return (
    <div className="absolute bottom-0 left-[1155px] flex h-[26px] w-[226px] items-center rounded-sm border border-[#a9c6e8] bg-white pl-8 text-[#0a6cd6]">
      <svg className="absolute -top-1 -left-px" width="32" height="30" viewBox="0 0 32 30" aria-hidden="true">
        <path d="M4 5L25 0c2 0 3 1 3 3l3 19c0 2-1 3-3 4L9 30c-2 0-3-1-4-3L1 8c0-2 1-3 3-3z" fill="#f4511e" />
        <path d="M23 8c-7-2-14-1-14 3 0 5 14 3 14 8 0 4-8 5-14 2" fill="none" stroke="#fff" strokeWidth="4" />
      </svg>
      <button className="w-6 text-center text-[15px] leading-5 font-bold">中</button>
      <svg width="168" height="24" viewBox="0 0 168 24" fill="none" stroke={blue} strokeWidth="2" aria-hidden="true">
        <circle cx="9" cy="9" r="2" />
        <path d="M15 11v3l-2 3" strokeWidth="3" />
        <rect x="33" y="4" width="6" height="10" rx="3" fill={blue} stroke="none" />
        <path d="M31 11c0 7 10 7 10 0M36 16v4" />
        <rect x="53" y="6" width="14" height="12" rx="1" />
        <path d="M55 10h10M55 14h10M58 7v10M62 7v10" strokeWidth="1" />
        <path d="M78 7l4-1c1 2 3 2 4 0l4 1 1 4-3 1v7h-8v-7l-3-1z" fill="#b06cf0" stroke="#f3727c" strokeWidth="1" />
        <circle cx="92" cy="3" r="3" fill="#f4511e" stroke="none" />
        <path d="M101 18c-1-5 0-11 4-11h6c4 0 5 6 4 11" strokeWidth="3" />
        <path d="M103 10h10v6h-10z" fill={blue} />
        <path d="M103 12h4M105 10v4M111 10v4" stroke="#fff" strokeWidth="1" />
        <path d="M126 6h5v5h-5zM126 13h5v5h-5zM134 13h5v5h-5z" fill={blue} />
        <circle cx="136" cy="8" r="3" fill={blue} />
        <circle cx="156" cy="12" r="5" strokeWidth="3" />
        <path d="M156 5v14M150 9l12 6M162 9l-12 6" strokeWidth="3" />
        <path d="M156 9v8" stroke="#fff" />
      </svg>
    </div>
  );
}

export default function App() {
  return (
    <div className="relative flex min-h-screen flex-col overflow-hidden bg-white font-['Noto_Sans','Noto_Sans_CJK_SC',sans-serif]">
      <Header />
      <Ribbon />
      <SelectionBar />
      <div className="flex flex-1">
        <ResourceBar />
        <Navigator />
        <Workspace />
      </div>
      <footer className="h-[22px] border-t border-[#a4a4a4] bg-white pl-[3px] text-[11px] leading-[22px] font-medium text-black">
        选择曲线定义断裂线/局部放大图边界
      </footer>
      <ImeBar />
      <div className="pointer-events-none absolute right-0.5 bottom-3.5 font-['Noto_Sans_CJK_SC',sans-serif] text-[38px] leading-10 font-light whitespace-nowrap text-white/70 [text-shadow:1px_1px_1px_#888,-1px_-1px_1px_#ddd]">
        CSDN @山涧果子
      </div>
    </div>
  );
}
